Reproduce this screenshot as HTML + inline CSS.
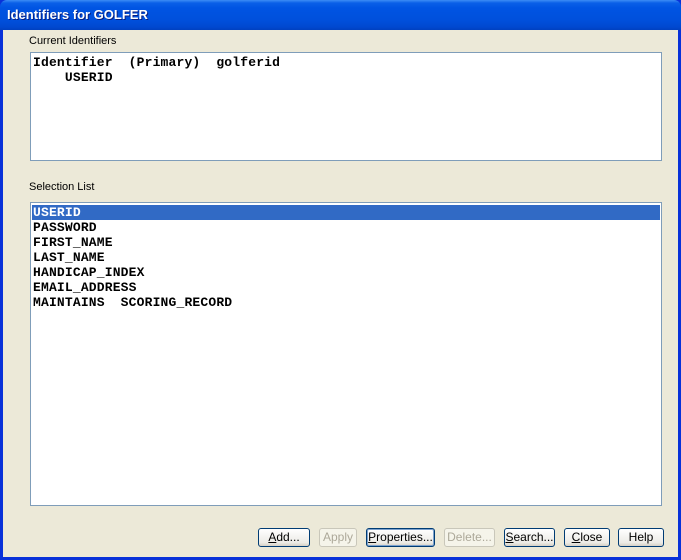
<!DOCTYPE html>
<html><head><meta charset="utf-8"><style>
*{margin:0;padding:0;box-sizing:border-box}
body{width:681px;height:560px;overflow:hidden;background:#0831d9;font-family:Tahoma,"Liberation Sans",sans-serif;position:relative}
.title{position:absolute;left:0;top:0;width:681px;height:30px;border-radius:7px 7px 0 0;background:linear-gradient(#3d8cf5 0,#0a5fe8 3px,#0054e3 8px,#0050dc 20px,#0048d0 27px,#0040c0 30px)}
.title span{position:absolute;left:7px;top:7px;color:#fff;font-weight:bold;font-size:13px;text-shadow:1px 1px #0a1f80}
.client{position:absolute;left:3px;top:30px;width:675px;height:527px;background:#ece9d8}
.lbl{position:absolute;font-size:11px;color:#000}
.box{position:absolute;background:#fff;border:1px solid #7f9db9}
.mono{font-family:"Liberation Mono",monospace;font-weight:bold;font-size:13px;letter-spacing:0.17px;line-height:15px;white-space:pre;color:#000}
.sel{background:#316ac5;color:#fff;outline:1px dotted #fff}
.btn{position:absolute;top:528px;height:19px;border:1px solid #003c74;border-radius:3px;background:linear-gradient(#fff,#ecebe6 80%,#d6d0c5);font-size:12px;text-align:center;line-height:16px;color:#000}
.dis{border-color:#c9c7ba;color:#aca899;background:#f5f4ea}
.def{box-shadow:inset 0 0 0 1px #7da2ce}
</style></head><body>
<div class="title"><span>Identifiers for GOLFER</span></div>
<div class="client"></div>
<div class="lbl" style="left:29px;top:35px">Current Identifiers</div>
<div class="box mono" style="left:30px;top:52px;width:632px;height:109px;padding:2px 0 0 2px">Identifier  (Primary)  golferid
    USERID</div>
<div class="lbl" style="left:29px;top:181px">Selection List</div>
<div class="box mono" style="left:30px;top:202px;width:632px;height:304px;padding:2px 1px 0 1px"><div class="sel" style="padding-left:1px">USERID</div><div style="padding-left:1px">PASSWORD
FIRST_NAME
LAST_NAME
HANDICAP_INDEX
EMAIL_ADDRESS
MAINTAINS  SCORING_RECORD</div></div>
<div class="btn" style="left:258px;width:52px"><u>A</u>dd...</div>
<div class="btn dis" style="left:319px;width:38px">Apply</div>
<div class="btn def" style="left:366px;width:69px"><u>P</u>roperties...</div>
<div class="btn dis" style="left:444px;width:51px">Delete...</div>
<div class="btn" style="left:504px;width:51px"><u>S</u>earch...</div>
<div class="btn" style="left:564px;width:46px"><u>C</u>lose</div>
<div class="btn" style="left:618px;width:46px">Help</div>
</body></html>
